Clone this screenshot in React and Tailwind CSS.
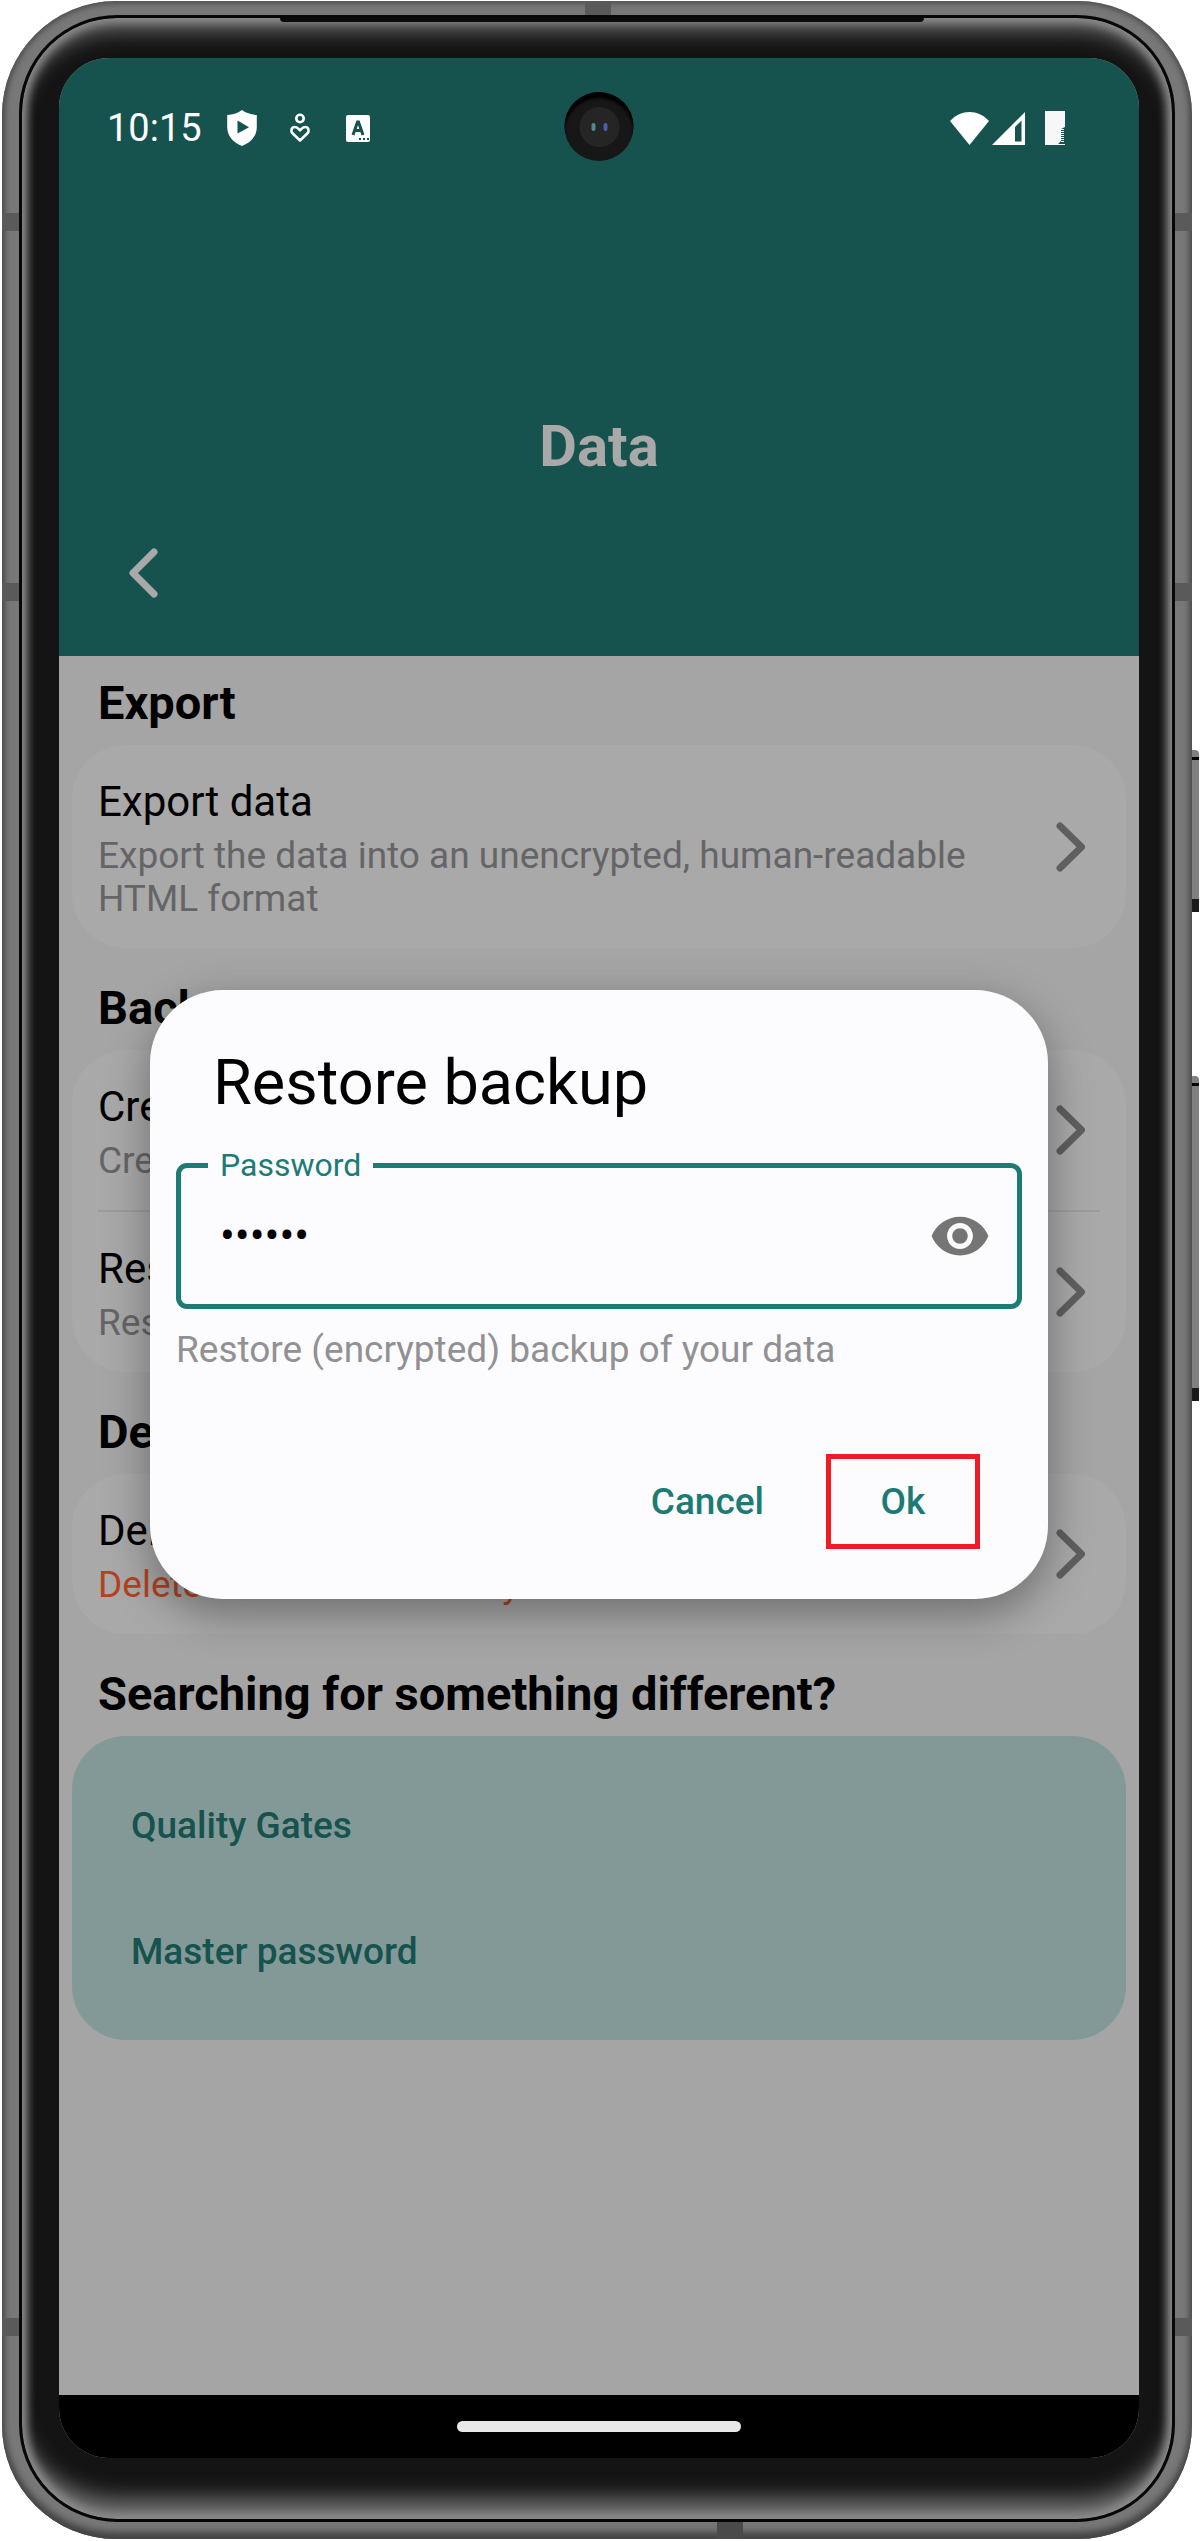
import { useState } from "react";

const ShieldIcon = () => (
  <svg viewBox="0 0 36 36" className="size-9" aria-hidden="true">
    <path
      fillRule="evenodd"
      fill="#fff"
      d="M18 0c4 3 8.500 4.500 14.800 5V17c0 9-5.800 15.500-14.800 19C9 32.500 3.200 26 3.200 17V5C9.500 4.500 14 3 18 0Zm-4.500 10.500v13L25 17.200Z"
    />
  </svg>
);

const CareIcon = () => (
  <svg viewBox="0 0 36 36" className="size-9" fill="none" stroke="#fff" strokeWidth="2.6" aria-hidden="true">
    <circle cx="18" cy="8.500" r="3.700" />
    <path strokeLinejoin="round" d="m18 30.500-7.500-7.200c-2.200-2.300-1-6.300 2.300-6.300 2.400 0 3.800 1.800 5.200 3.300 1.400-1.500 2.800-3.300 5.200-3.300 3.300 0 4.500 4 2.300 6.300Z" />
  </svg>
);

const LetterIcon = () => (
  <svg viewBox="0 0 36 36" className="size-9" aria-hidden="true">
    <rect x="6" y="5" width="24" height="27" rx="2" fill="#fff" />
    <path d="m13 25 4.500-13h1L23 25M14.500 20.500h7" fill="none" stroke="#16524e" strokeWidth="3" />
    <path d="M19 28h2v2h-2zM23 28h2v2h-2zM27 28h2v2h-2z" fill="#16524e" />
  </svg>
);

const WifiIcon = () => (
  <svg viewBox="0 0 39 33" className="h-[33px] w-[39px]" aria-hidden="true">
    <path fill="#fff" d="M19.500 33 0 9C11-3 28-3 39 9Z" />
  </svg>
);

const SignalIcon = () => (
  <svg viewBox="0 0 33 33" className="h-[33px] w-[33px]" aria-hidden="true">
    <path fill="#fff" fillRule="evenodd" d="M33 0v33H0ZM29.500 8.500l-6.500 6.500v14.500h6.500Z" />
  </svg>
);

const BatteryIcon = () => (
  <svg viewBox="0 0 20 34" className="h-[34px] w-5" aria-hidden="true">
    <path fill="#f6f8f8" d="M0 0h20v16l-4 2v12l-3 3h7v1H0Z" />
    <path d="M17.500 18v14" stroke="#f6f8f8" strokeWidth="3" strokeDasharray="1 1" />
  </svg>
);

const Chevron = () => (
  <svg viewBox="0 0 30 50" className="h-[50px] w-[30px] shrink-0" fill="none" aria-hidden="true">
    <path d="M4 4l21.500 21L4 46" stroke="#5f5f60" strokeWidth="7" strokeLinecap="round" strokeLinejoin="round" />
  </svg>
);

const EyeIcon = () => (
  <svg viewBox="0 0 24 24" className="size-[62px]" fill="#757575" aria-hidden="true">
    <path d="M12 4.500C7 4.500 2.730 7.610 1 12c1.730 4.390 6 7.500 11 7.500s9.270-3.110 11-7.500c-1.730-4.390-6-7.500-11-7.500zM12 17c-2.760 0-5-2.240-5-5s2.240-5 5-5 5 2.240 5 5-2.240 5-5 5zm0-8c-1.660 0-3 1.340-3 3s1.340 3 3 3 3-1.340 3-3-1.340-3-3-3z" />
  </svg>
);

function Section({ title, children }) {
  return (
    <section>
      <h2 className="px-[39px] pt-[19px] pb-[14px] text-[47px] leading-[56px] font-bold text-black">{title}</h2>
      {children}
    </section>
  );
}

function Card({ children }) {
  return <div className="mx-[13px] mb-[13px] rounded-[54px] bg-[#a9a9a9]">{children}</div>;
}

function Row({ title, text, danger }) {
  return (
    <button type="button" className="flex min-h-[160px] w-full items-center justify-between pr-10 pl-[26px] text-left">
      <span className="flex flex-col gap-2 pt-8 pr-14 pb-7">
        <span className="text-[42px] leading-[49px] text-black">{title}</span>
        <span className={danger ? "text-[37px] leading-[43px] text-[#b3421f]" : "text-[37px] leading-[43px] text-[#656567]"}>
          {text}
        </span>
      </span>
      <Chevron />
    </button>
  );
}

function StatusBar() {
  return (
    <div className="flex items-center justify-between pt-[47px] pr-[74px] pl-12 text-white">
      <div className="flex items-center gap-[22px]">
        <span className="text-[38px] leading-[46px]">10:15</span>
        <ShieldIcon />
        <CareIcon />
        <LetterIcon />
      </div>
      <div className="flex items-center">
        <WifiIcon />
        <span className="pr-5 pl-[3px]">
          <SignalIcon />
        </span>
        <BatteryIcon />
      </div>
    </div>
  );
}

function Camera() {
  return (
    <div className="absolute top-[34px] left-1/2 flex size-[69px] -translate-x-1/2 items-center justify-center rounded-full bg-[#171717] shadow-[inset_0_6px_3px_#000]">
      <div className="flex size-10 items-center justify-center gap-2 rounded-full bg-[#252525]">
        <div className="h-2 w-1 rounded-full bg-[#4f8a8c]" />
        <div className="h-2 w-1 rounded-full bg-[#4a5fa5]" />
      </div>
    </div>
  );
}

function RestoreDialog() {
  const [visible, setVisible] = useState(false);
  const [password, setPassword] = useState("secret");
  return (
    <div className="absolute inset-0 flex items-center px-[91px] pt-[73px]">
      <form
        role="dialog"
        aria-labelledby="dialog-title"
        onSubmit={(e) => e.preventDefault()}
        className="w-full rounded-[73px] bg-[#fcfcff] px-[26px] pt-14 pb-[50px] shadow-[0_14px_44px_rgba(0,0,0,0.36)]"
      >
        <h2 id="dialog-title" className="px-[37px] text-[63px] leading-[74px] text-black">
          Restore backup
        </h2>
        <fieldset className="mt-[26px] rounded-[11px] border-5 border-[#1c7b74] pr-[26px] pb-4 pl-[27px]">
          <legend className="px-3 text-[32px] leading-[38px] text-[#1c7b74]">
            <label htmlFor="password">Password</label>
          </legend>
          <div className="flex h-[104px] items-center">
            <input
              id="password"
              type={visible ? "text" : "password"}
              value={password}
              onChange={(e) => setPassword(e.target.value)}
              className="min-w-0 flex-1 bg-transparent px-3 text-[44px] leading-[49px] text-black outline-none"
            />
            <button type="button" aria-label="Show password" onClick={() => setVisible(!visible)}>
              <EyeIcon />
            </button>
          </div>
        </fieldset>
        <p className="mt-[19px] text-[37px] leading-[43px] text-[#919194]">Restore (encrypted) backup of your data</p>
        <div className="mt-[83px] flex justify-end gap-[30px] pr-[42px] text-[37px] font-medium text-[#1c7b74]">
          <button type="button" className="px-8">
            Cancel
          </button>
          <button type="submit" className="h-[95px] w-[154px] border-5 border-[#ee1c24]">
            Ok
          </button>
        </div>
      </form>
    </div>
  );
}

function Screen() {
  return (
    <main className="relative flex flex-1 flex-col overflow-hidden rounded-[50px] bg-[#a5a5a5]">
      <header className="bg-[#16524e] pb-[43px]">
        <StatusBar />
        <h1 className="mt-[261px] text-center text-[58px] leading-[68px] font-bold text-[#a9a9a9]">Data</h1>
        <button type="button" aria-label="Back" className="mt-[53px] ml-11 flex size-20 items-center justify-center">
          <svg viewBox="0 0 30 50" className="h-[50px] w-[30px]" fill="none" aria-hidden="true">
            <path d="M26 4 5 25l21 21" stroke="#a9a9a9" strokeWidth="7" strokeLinecap="round" strokeLinejoin="round" />
          </svg>
        </button>
      </header>
      <div className="flex-1">
        <Section title="Export">
          <Card>
            <Row title="Export data" text="Export the data into an unencrypted, human-readable HTML format" />
          </Card>
        </Section>
        <Section title="Backup">
          <Card>
            <Row title="Create backup" text="Create (encrypted) backup of your data" />
            <hr className="mx-[26px] border-t-2 border-[#9c9c9c]" />
            <Row title="Restore backup" text="Restore (encrypted) backup" />
          </Card>
        </Section>
        <Section title="Delete">
          <Card>
            <Row title="Delete data" text="Delete all data irrevocably" danger />
          </Card>
        </Section>
        <Section title="Searching for something different?">
          <nav className="mx-[13px] flex flex-col rounded-[54px] bg-[#829998] px-[59px] pt-[27px] pb-[25px] text-[37px] font-medium text-[#16524e]">
            <a href="#quality-gates" className="flex h-[126px] items-center">
              Quality Gates
            </a>
            <a href="#master-password" className="flex h-[126px] items-center">
              Master password
            </a>
          </nav>
        </Section>
      </div>
      <div className="flex h-[63px] items-center justify-center bg-black">
        <div className="h-[11px] w-[284px] rounded-full bg-[#e8e8e8]" />
      </div>
      <Camera />
      <RestoreDialog />
    </main>
  );
}

export default function App() {
  return (
    <div className="flex min-h-screen bg-white pt-px pr-2 pb-[2px] pl-[2px] font-[Roboto,sans-serif]">
      <div className="relative flex flex-1 flex-col rounded-[114px] bg-[#787878] px-[17px] pt-[14px] pb-[17px] shadow-[inset_0_0_6px_2px_#484848,inset_0_-8px_8px_-2px_#3c3c3c]">
        {/* antenna bands */}
        <div className="absolute top-[212px] left-0 h-[18px] w-full bg-[#5a5a5a]" />
        <div className="absolute top-[582px] left-0 h-[18px] w-full bg-[#5a5a5a]" />
        <div className="absolute bottom-[203px] left-0 h-[18px] w-full bg-[#5a5a5a]" />
        <div className="absolute top-0 left-[583px] h-[14px] w-[26px] bg-[#5a5a5a]" />
        <div className="absolute bottom-0 left-[715px] h-[17px] w-[26px] bg-[#4a4a4a]" />
        {/* power and volume keys */}
        <div className="absolute top-[749px] -right-[7px] flex h-[162px] w-[7px] flex-col justify-between rounded-r-sm bg-[#808080] pt-[7px]">
          <div className="h-[3px] bg-black" />
          <div className="h-[13px] bg-[#1a1a1a]" />
        </div>
        <div className="absolute top-[1075px] -right-[7px] flex h-[325px] w-[7px] flex-col justify-between rounded-r-sm bg-[#808080] pt-[7px]">
          <div className="h-[3px] bg-black" />
          <div className="h-[13px] bg-[#1a1a1a]" />
        </div>
        {/* earpiece slot */}
        <div className="absolute top-[17px] right-[268px] left-[278px] z-10 h-1 rounded-b-full bg-[#0a0a0a]" />
        <div className="relative flex flex-1 flex-col rounded-[98px] border-3 border-[#070707] bg-[#141414] pt-10 pr-[33px] pb-[61px] pl-[37px] shadow-[inset_0_0_9px_5px_#8c8c8c,inset_0_22px_20px_-8px_#606060,inset_0_-30px_22px_-10px_#747474]">
          <Screen />
        </div>
      </div>
    </div>
  );
}
